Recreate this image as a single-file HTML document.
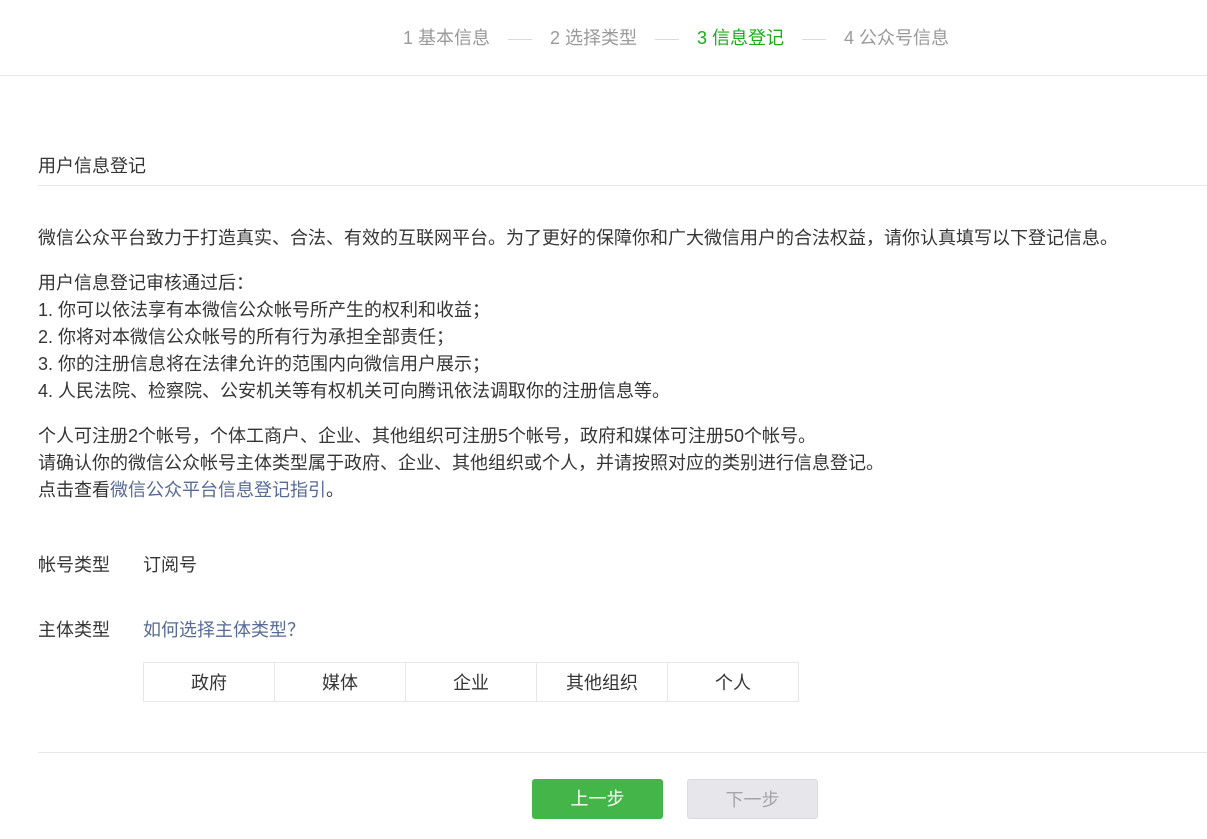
<!DOCTYPE html>
<html><head><meta charset="utf-8"><style>
*{margin:0;padding:0;box-sizing:border-box}
body{width:1207px;height:839px;background:#fff;font-family:"Liberation Sans","Noto Sans CJK SC",sans-serif;color:#353535;font-size:18px;position:relative;overflow:hidden}
.a{position:absolute;white-space:nowrap}
.hdr{position:absolute;left:0;top:0;width:1207px;height:76px;border-bottom:1px solid #e7e7eb}
.st{color:#9a9a9a;font-size:18px;top:25px;line-height:26px}
.dash{position:absolute;top:39px;width:24px;height:1px;background:#d9dadc}
a{color:#576b95;text-decoration:none}
p{line-height:27px}
table{border-collapse:collapse}
td{border:1px solid #e7e7eb;width:131px;height:39px;text-align:center;font-size:18px}
.btn{position:absolute;top:779px;width:131px;height:40px;border-radius:3px;text-align:center;line-height:40px;font-size:18px}
</style></head><body>
<div class="hdr"></div>
<div class="a st" style="left:403px">1 基本信息</div>
<div class="dash" style="left:508px"></div>
<div class="a st" style="left:550px">2 选择类型</div>
<div class="dash" style="left:655px"></div>
<div class="a st" style="left:697px;color:#1aad19">3 信息登记</div>
<div class="dash" style="left:802px"></div>
<div class="a st" style="left:844px">4 公众号信息</div>

<div class="a" style="left:38px;top:153px;line-height:27px">用户信息登记</div>
<div class="a" style="left:38px;top:185px;width:1169px;height:1px;background:#e7e7eb"></div>

<div class="a" style="left:38px;top:225px">
<p>微信公众平台致力于打造真实、合法、有效的互联网平台。为了更好的保障你和广大微信用户的合法权益，请你认真填写以下登记信息。</p>
<p style="margin-top:18px">用户信息登记审核通过后：<br>1. 你可以依法享有本微信公众帐号所产生的权利和收益；<br>2. 你将对本微信公众帐号的所有行为承担全部责任；<br>3. 你的注册信息将在法律允许的范围内向微信用户展示；<br>4. 人民法院、检察院、公安机关等有权机关可向腾讯依法调取你的注册信息等。</p>
<p style="margin-top:18px">个人可注册2个帐号，个体工商户、企业、其他组织可注册5个帐号，政府和媒体可注册50个帐号。<br>请确认你的微信公众帐号主体类型属于政府、企业、其他组织或个人，并请按照对应的类别进行信息登记。<br>点击查看<a>微信公众平台信息登记指引</a>。</p>
</div>

<div class="a" style="left:38px;top:552px;line-height:27px">帐号类型</div>
<div class="a" style="left:143px;top:552px;line-height:27px">订阅号</div>
<div class="a" style="left:38px;top:617px;line-height:27px">主体类型</div>
<div class="a" style="left:143px;top:617px;line-height:27px"><a>如何选择主体类型？</a></div>

<table class="a" style="left:143px;top:662px"><tr><td>政府</td><td>媒体</td><td>企业</td><td>其他组织</td><td>个人</td></tr></table>

<div class="a" style="left:38px;top:752px;width:1169px;height:1px;background:#e7e7eb"></div>
<div class="btn" style="left:532px;background:#44b549;color:#fff">上一步</div>
<div class="btn" style="left:687px;background:#e7e7eb;color:#a5a6aa;border:1px solid #dadbde">下一步</div>
</body></html>
